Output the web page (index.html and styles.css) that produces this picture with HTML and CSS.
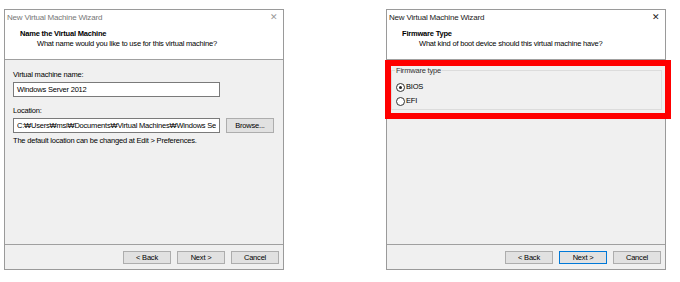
FILE: index.html
```html
<!DOCTYPE html>
<html lang="en">
<head>
    <meta charset="UTF-8">
    <title>New Virtual Machine Wizard</title>
    <link rel="stylesheet" href="styles.css">
</head>
<body>
    <div class="shots">
        <div class="wizard">
            <div class="title-bar">
                <span class="title">New Virtual Machine Wizard</span>
                <span class="close close-dim">&#x2715;</span>
            </div>
            <div class="header">
                <div class="header-title">Name the Virtual Machine</div>
                <div class="header-sub">What name would you like to use for this virtual machine?</div>
            </div>
            <div class="content">
                <div class="field-label">Virtual machine name:</div>
                <div class="text-box name-box">Windows Server 2012</div>
                <div class="field-label location-label">Location:</div>
                <div class="location-row">
                    <div class="text-box path-box"><span class="path-text">C:&#x20A9;Users&#x20A9;msi&#x20A9;Documents&#x20A9;Virtual Machines&#x20A9;Windows Server 2012</span></div>
                    <button class="btn browse-btn">Browse...</button>
                </div>
                <div class="hint">The default location can be changed at Edit &gt; Preferences.</div>
            </div>
            <div class="footer">
                <button class="btn">&lt; Back</button>
                <button class="btn">Next &gt;</button>
                <button class="btn">Cancel</button>
            </div>
        </div>

        <div class="wizard">
            <div class="title-bar">
                <span class="title title-dark">New Virtual Machine Wizard</span>
                <span class="close">&#x2715;</span>
            </div>
            <div class="header">
                <div class="header-title">Firmware Type</div>
                <div class="header-sub">What kind of boot device should this virtual machine have?</div>
            </div>
            <div class="content content-fw">
                <fieldset class="group">
                    <legend>Firmware type</legend>
                    <label class="radio"><span class="dot checked"></span>BIOS</label>
                    <label class="radio"><span class="dot"></span>EFI</label>
                </fieldset>
                <div class="highlight"></div>
            </div>
            <div class="footer">
                <button class="btn">&lt; Back</button>
                <button class="btn default-btn">Next &gt;</button>
                <button class="btn">Cancel</button>
            </div>
        </div>
    </div>
</body>
</html>
```

FILE: styles.css
```css
body {
    margin: 0;
    padding: 0;
    background-color: #fff;
    font-family: 'Liberation Sans', Arial, sans-serif;
    font-size: 7.5px;
    letter-spacing: -0.2px;
    color: #000;
}

.shots {
    display: flex;
    gap: 102px;
    padding: 9px 0 0 4px;
}

.wizard {
    width: 280px;
    height: 261px;
    border: 1px solid #9a9a9a;
    box-sizing: border-box;
    display: flex;
    flex-direction: column;
    background-color: #f0f0f0;
}

.title-bar {
    height: 14px;
    background-color: #fff;
    display: flex;
    justify-content: space-between;
    align-items: center;
    padding: 0 5px 0 2px;
}

.title {
    font-size: 8px;
    color: #777;
}

.title-dark {
    color: #222;
}

.close {
    font-size: 9px;
    color: #222;
}

.close-dim {
    color: #999;
}

.header {
    height: 36px;
    background-color: #fff;
    border-bottom: 1px solid #a0a0a0;
    padding: 5px 0 0 15px;
    box-sizing: border-box;
}

.header-title {
    font-weight: bold;
    line-height: 10px;
}

.header-sub {
    padding-left: 17px;
    line-height: 10px;
}

.content {
    flex: 1;
    padding: 10px 8px 0 8px;
    position: relative;
}

.field-label {
    line-height: 10px;
    margin-bottom: 2px;
}

.location-label {
    margin-top: 9px;
}

.text-box {
    height: 15px;
    border: 1px solid #7a7a7a;
    background-color: #fff;
    box-sizing: border-box;
    padding: 0 3px;
    line-height: 13px;
    white-space: nowrap;
    overflow: hidden;
}

.name-box {
    width: 207px;
}

.location-row {
    display: flex;
    align-items: center;
    gap: 6px;
}

.path-box {
    width: 207px;
    flex-shrink: 0;
}

.path-text {
    display: block;
    width: 199px;
    overflow: hidden;
}

.hint {
    margin-top: 3px;
    line-height: 10px;
}

.btn {
    width: 48px;
    height: 13px;
    padding: 0;
    font-family: inherit;
    font-size: 7.5px;
    letter-spacing: -0.2px;
    line-height: 11px;
    color: #000;
    background-color: #e1e1e1;
    border: 1px solid #adadad;
}

.browse-btn {
    height: 15px;
}

.default-btn {
    border-color: #0078d7;
}

.footer {
    height: 23px;
    border-top: 1px solid #a0a0a0;
    display: flex;
    justify-content: flex-end;
    align-items: center;
    gap: 6px;
    padding: 1px 4px 0 0;
}

.content-fw {
    padding: 6px 3px 0 4px;
}

.group {
    margin: 0;
    height: 44px;
    box-sizing: border-box;
    border: 1px solid #dcdcdc;
    padding: 0 4px;
}

.group legend {
    padding: 0 1px;
    margin-left: -1px;
    color: #333;
    line-height: 9px;
}

.radio {
    display: flex;
    align-items: center;
    line-height: 10px;
    margin-top: 7px;
}

.radio + .radio {
    margin-top: 4px;
}

.dot {
    width: 9px;
    height: 9px;
    border: 1px solid #333;
    border-radius: 50%;
    background-color: #fff;
    margin-right: 1px;
    box-sizing: border-box;
    position: relative;
}

.dot.checked::after {
    content: "";
    position: absolute;
    left: 2px;
    top: 2px;
    width: 3px;
    height: 3px;
    border-radius: 50%;
    background-color: #222;
}

.highlight {
    position: absolute;
    left: -2px;
    top: 0;
    width: 286px;
    height: 59px;
    border: 6px solid #f00;
    box-sizing: border-box;
    pointer-events: none;
}
```
